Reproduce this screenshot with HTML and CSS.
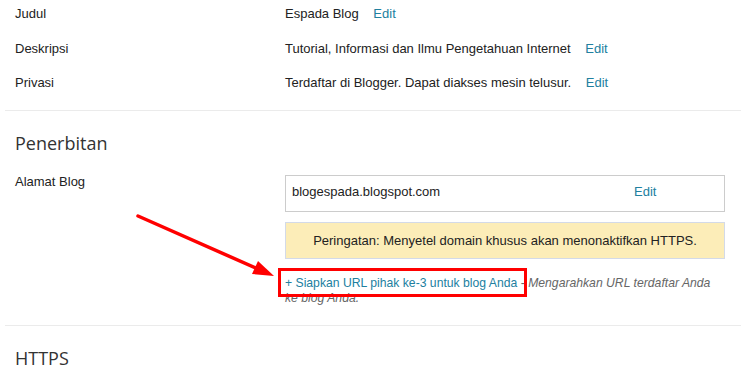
FILE: index.html
```html
<!DOCTYPE html>
<html lang="id">

<head>
    <meta charset="UTF-8">
    <meta name="viewport" content="width=device-width, initial-scale=1.0">
    <title>Setelan Dasar</title>
    <link rel="stylesheet" href="styles.css">
</head>

<body>
    <div class="page">
        <div class="section section-top">
            <div class="row">
                <div class="label">Judul</div>
                <div class="value">Espada Blog <a class="edit" href="#">Edit</a></div>
            </div>
            <div class="row">
                <div class="label">Deskripsi</div>
                <div class="value">Tutorial, Informasi dan Ilmu Pengetahuan Internet <a class="edit" href="#">Edit</a></div>
            </div>
            <div class="row">
                <div class="label">Privasi</div>
                <div class="value">Terdaftar di Blogger. Dapat diakses mesin telusur. <a class="edit" href="#">Edit</a></div>
            </div>
        </div>

        <div class="section">
            <h2 class="section-title">Penerbitan</h2>
            <div class="row row-address">
                <div class="label">Alamat Blog</div>
                <div class="value">
                    <div class="address-box">
                        <span class="address">blogespada.blogspot.com</span>
                        <a class="address-edit" href="#">Edit</a>
                    </div>
                    <div class="warning">Peringatan: Menyetel domain khusus akan menonaktifkan HTTPS.</div>
                    <p class="setup"><a class="setup-link" href="#">+ Siapkan URL pihak ke-3 untuk blog Anda</a> - <em class="setup-note">Mengarahkan URL terdaftar Anda ke blog Anda.</em></p>
                </div>
            </div>
        </div>

        <div class="section section-last">
            <h2 class="section-title">HTTPS</h2>
        </div>
    </div>

    <!-- annotation drawn on top of the screenshot -->
    <svg class="markup" width="741" height="389" viewBox="0 0 741 389">
        <line x1="138" y1="216" x2="258" y2="269" stroke="#f00" stroke-width="3.5" stroke-linecap="round" />
        <polygon points="274,276 252,274 258,261" fill="#f00" />
        <rect x="279.5" y="269.5" width="246" height="26" fill="none" stroke="#f00" stroke-width="3" />
    </svg>
</body>

</html>
```

FILE: styles.css
```css
body {
    margin: 0;
    font-family: "Liberation Sans", Arial, sans-serif;
    font-size: 13px;
    color: #222;
    background: #fff;
    position: relative;
    height: 389px;
    overflow: hidden;
}

a {
    text-decoration: none;
}

.page {
    margin-left: 5px;
}

.section {
    padding: 0 0 19px 10px;
    border-bottom: 1px solid #ebebeb;
}

.section-top {
    padding-top: 5px;
}

.section-last {
    border-bottom: none;
}

.section-title {
    margin: 20px 0 0;
    font-family: "Open Sans", sans-serif;
    font-size: 18px;
    font-weight: 400;
    line-height: 24px;
    color: #333;
}

.row {
    display: grid;
    grid-template-columns: 270px 440px;
    line-height: 17px;
}

.row + .row {
    margin-top: 17.5px;
}

.row-address {
    margin-top: 18px;
}

.edit {
    color: #21809f;
    margin-left: 11px;
}

.address-box {
    display: flex;
    margin-top: 2px;
    padding: 7px 0 11px 6px;
    border: 1px solid #ccc;
}

.address {
    flex: 1;
}

.address-edit {
    color: #21809f;
    width: 90px;
}

.warning {
    margin-top: 10px;
    padding: 9px 0;
    text-align: center;
    background: #fcedb8;
    border: 1px solid #d3dae8;
}

.setup {
    margin: 17px 0 0;
    max-width: 432px;
    font-size: 12.2px;
    line-height: 15px;
    color: #666;
}

.setup-link {
    color: #21809f;
}

.setup-note {
    font-style: italic;
}

.markup {
    position: absolute;
    top: 0;
    left: 0;
    pointer-events: none;
}
```
